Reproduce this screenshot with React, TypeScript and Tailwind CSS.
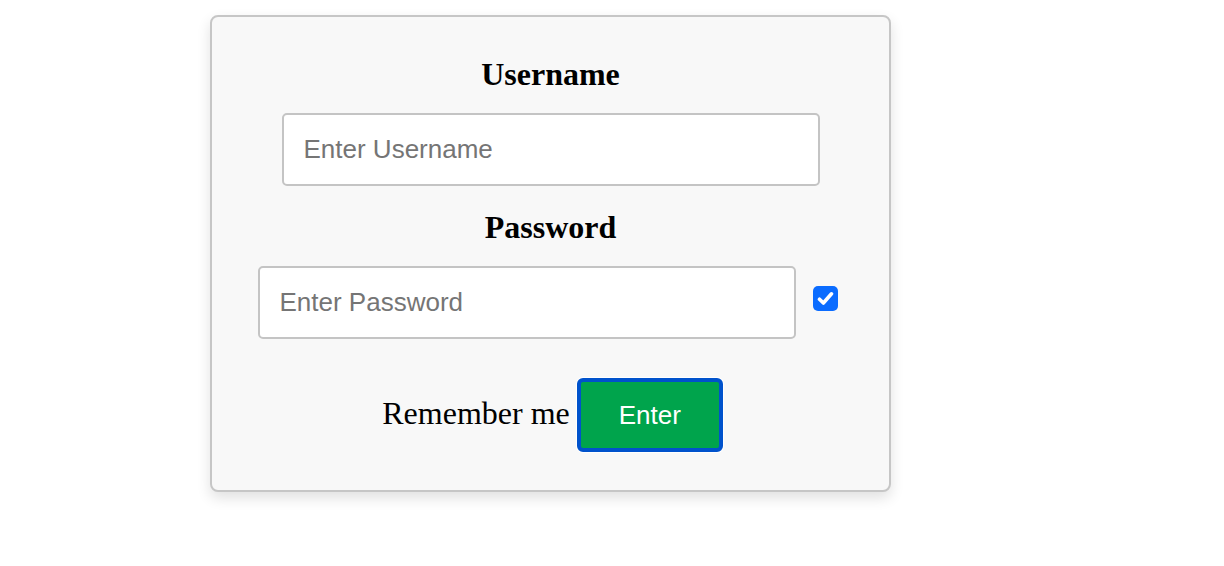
import { useState } from "react";

export default function App() {
  const [remember, setRemember] = useState(true);

  return (
    <div className="min-h-[566px] bg-white pt-[15px] pl-[210px]">
      <div className="flex w-[681px] flex-col items-center rounded-[8px] border-2 border-[#c6c6c6] bg-[#f8f8f8] pt-[39px] pb-[38px] shadow-[0_6px_14px_rgba(0,0,0,0.12)]">
        <label
          htmlFor="username"
          className="font-['Liberation_Serif','Times_New_Roman',serif] text-[32px] leading-[36px] font-bold text-black"
        >
          Username
        </label>
        <input
          id="username"
          type="text"
          placeholder="Enter Username"
          className="mt-[21px] h-[73px] w-[538px] rounded-[5px] border-2 border-[#c4c4c4] bg-white px-[20px] font-['Liberation_Sans',Arial,sans-serif] text-[26px] text-black outline-none placeholder:text-[#757575]"
        />

        <label
          htmlFor="password"
          className="mt-[23px] font-['Liberation_Serif','Times_New_Roman',serif] text-[32px] leading-[36px] font-bold text-black"
        >
          Password
        </label>
        <div className="mt-[21px] flex items-center gap-[17px] pr-[6px]">
          <input
            id="password"
            type="password"
            placeholder="Enter Password"
            className="h-[73px] w-[538px] rounded-[5px] border-2 border-[#c4c4c4] bg-white px-[20px] font-['Liberation_Sans',Arial,sans-serif] text-[26px] text-black outline-none placeholder:text-[#757575]"
          />
          <button
            type="button"
            onClick={() => setRemember(!remember)}
            className={`mb-[8px] flex h-[25px] w-[25px] items-center justify-center rounded-[5px] ${
              remember ? "bg-[#0b6cff]" : "border-2 border-[#767676] bg-white"
            }`}
          >
            {remember && (
              <svg width="17" height="15" viewBox="0 0 17 15" fill="none">
                <path
                  d="M2.5 8.2 L6.4 12 L14.5 2.8"
                  stroke="white"
                  strokeWidth="3.6"
                  strokeLinecap="round"
                  strokeLinejoin="round"
                />
              </svg>
            )}
          </button>
        </div>

        <div className="mt-[39px] flex items-baseline gap-[7px] pl-[4px]">
          <span className="font-['Liberation_Serif','Times_New_Roman',serif] text-[32px] leading-[36px] text-black">
            Remember me
          </span>
          <button
            type="submit"
            className="h-[74px] w-[146px] rounded-[6px] border-4 border-[#0052cc] bg-[#00a44c] font-['Liberation_Sans',Arial,sans-serif] text-[26px] text-white shadow-[0_0_0_1px_#ffffff]"
          >
            Enter
          </button>
        </div>
      </div>
    </div>
  );
}
